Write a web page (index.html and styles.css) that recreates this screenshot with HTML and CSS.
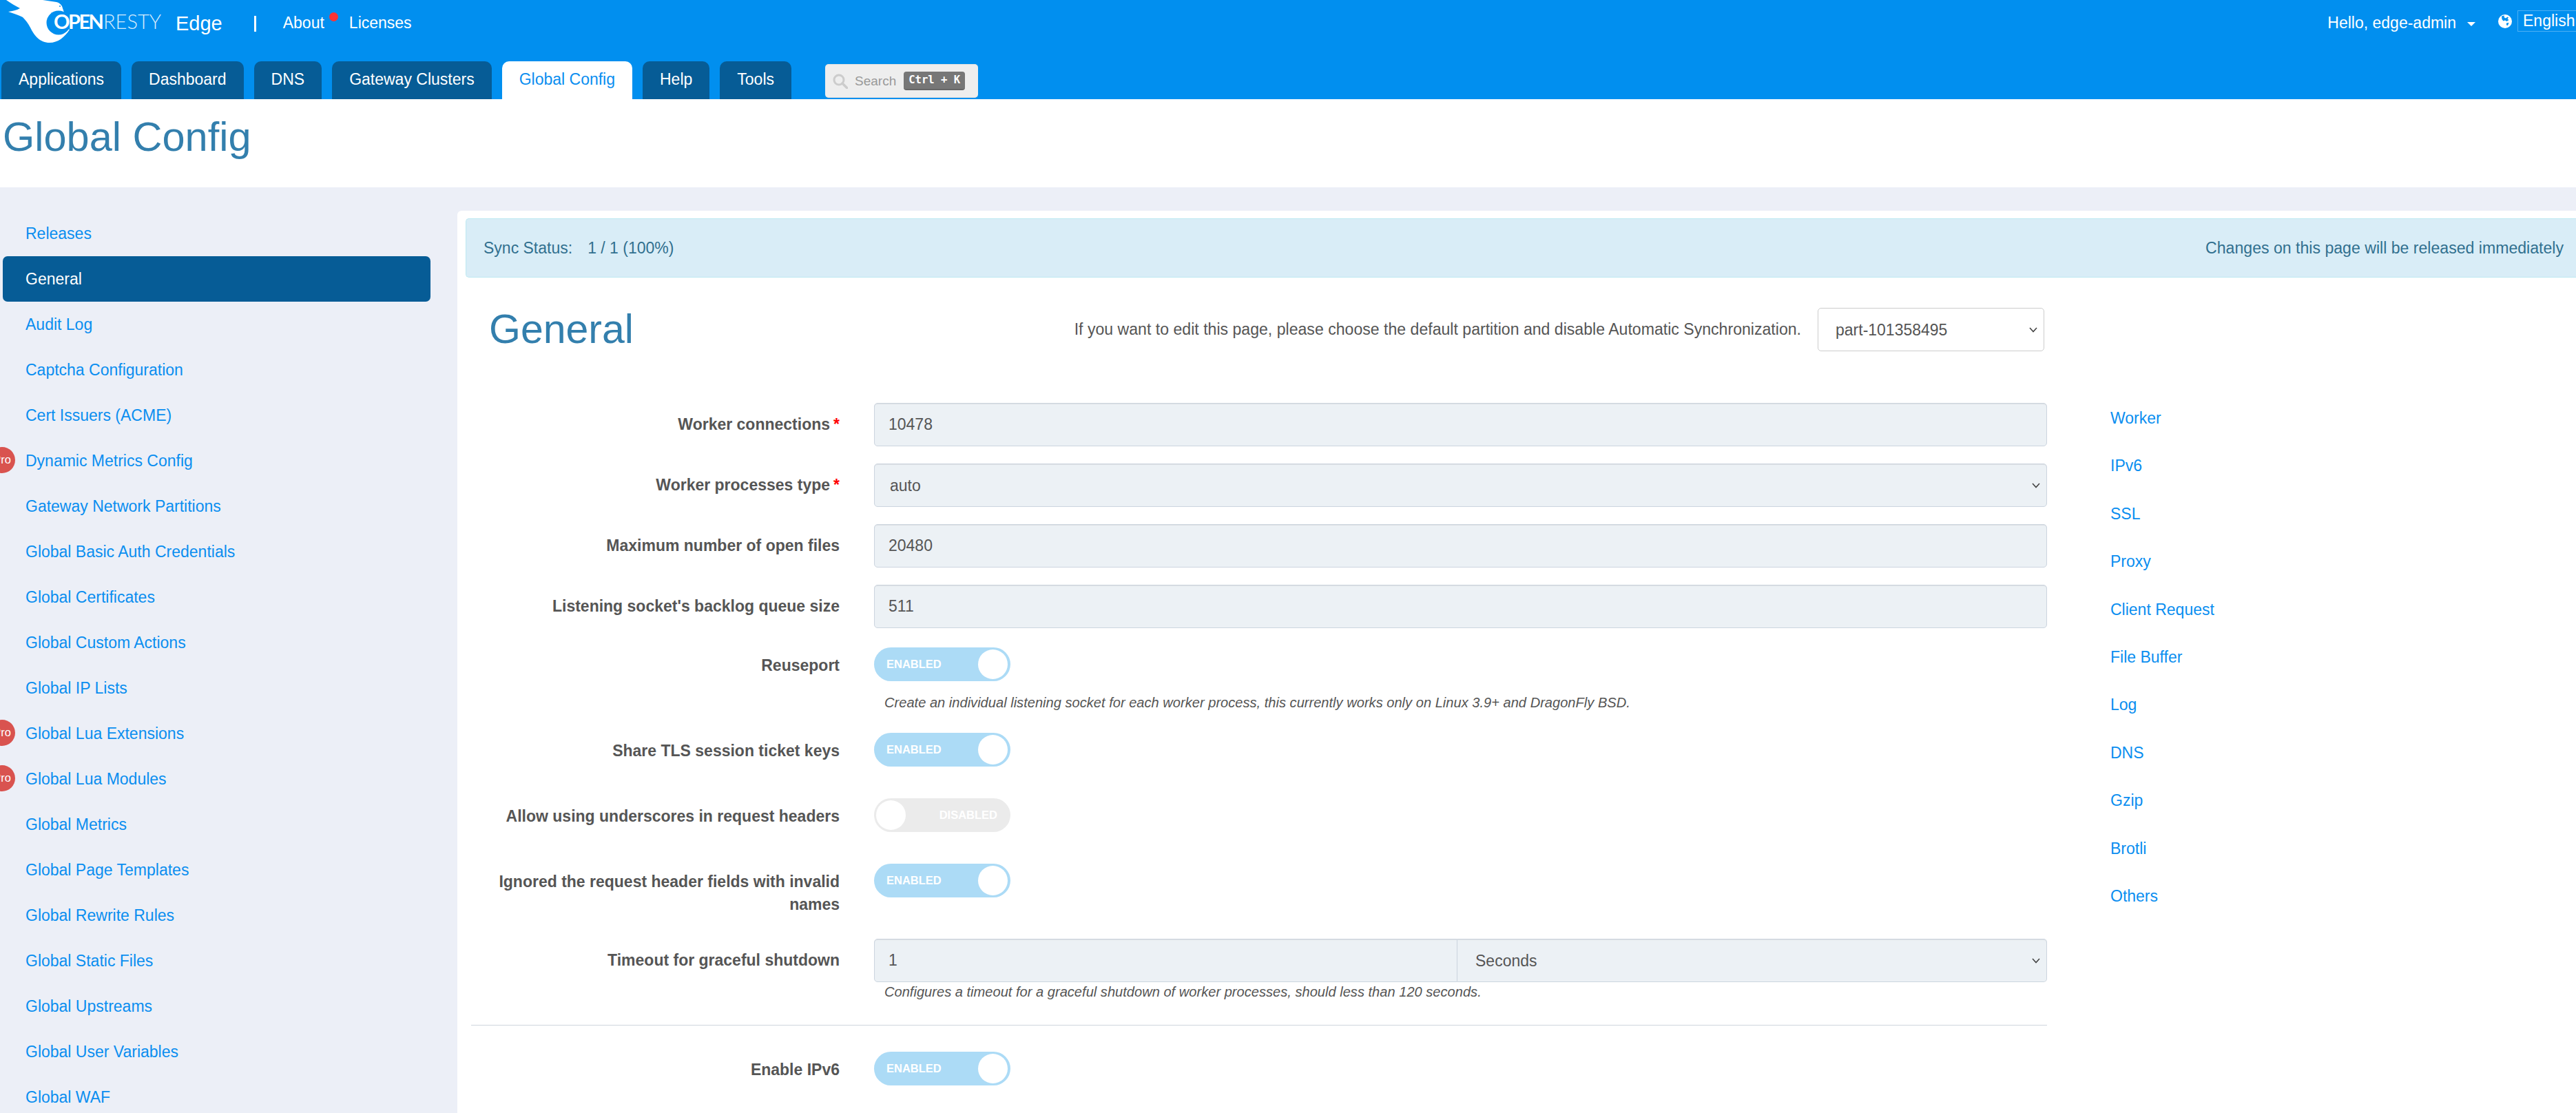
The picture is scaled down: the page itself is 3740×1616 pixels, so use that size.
FILE: index.html
```html
<!DOCTYPE html>
<html lang="en">
<head>
    <meta charset="UTF-8">
    <title>Global Config - OpenResty Edge</title>
    <link rel="stylesheet" href="styles.css">
</head>
<body>
    <header class="top-bar">
        <div class="brand-row">
            <svg class="logo" viewBox="0 0 245 70" width="245" height="70">
                <path class="logo-bird" d="M9 0C16 5 23 9 29 12C24 15 18 16 12 17C20 20 28 22 33 25C37 29 41 34 44 40C50 52 58 62 72 62C84 62 94 54 101 43L85 33L93 18L90 9Q87 4 82 3L62 0Z"/>
                <circle class="logo-cut" cx="85" cy="33" r="17.5"/>
                <circle class="logo-cut" cx="87" cy="9" r="1"/>
                <text class="logo-text" x="78" y="42"><tspan class="logo-open">OPEN</tspan><tspan class="logo-resty" x="150">RESTY</tspan></text>
            </svg>
            <span class="product-name">Edge</span>
            <span class="brand-sep"></span>
            <a class="top-link about-link">About<span class="red-dot"></span></a>
            <a class="top-link">Licenses</a>
            <div class="user-area">
                <span class="hello">Hello, edge-admin</span>
                <span class="caret"></span>
                <svg class="globe" viewBox="0 0 20 20" width="20" height="20">
                    <circle cx="10" cy="10" r="10" fill="#fff"/>
                    <path fill="#018fef" d="M5 2.5L9 1.5L8.5 4L11 5.5L13.5 3.5L15 4.5L13.5 6.5L15.5 8L12.5 10L10 8.5L7.5 9.5L5.5 7ZM12 12.5L15.5 12L14 16L12 15.5Z"/>
                </svg>
                <span class="lang-box">English</span>
            </div>
        </div>
        <nav class="tab-row">
            <a class="tab">Applications</a>
            <a class="tab">Dashboard</a>
            <a class="tab">DNS</a>
            <a class="tab">Gateway Clusters</a>
            <a class="tab active">Global Config</a>
            <a class="tab">Help</a>
            <a class="tab">Tools</a>
            <div class="search-box">
                <svg class="search-icon" viewBox="0 0 22 22" width="22" height="22">
                    <circle cx="9" cy="9" r="7" fill="none" stroke="#ccc" stroke-width="3"/>
                    <path d="M14 14L21 21" stroke="#ccc" stroke-width="3.5" stroke-linecap="round"/>
                </svg>
                <span class="search-text">Search</span>
                <kbd class="search-key">Ctrl + K</kbd>
            </div>
        </nav>
    </header>

    <div class="title-band">
        <h1>Global Config</h1>
    </div>

    <div class="main">
        <aside class="sidebar">
            <a class="side-item">Releases</a>
            <a class="side-item active">General</a>
            <a class="side-item">Audit Log</a>
            <a class="side-item">Captcha Configuration</a>
            <a class="side-item">Cert Issuers (ACME)</a>
            <a class="side-item"><span class="pro-badge">Pro</span>Dynamic Metrics Config</a>
            <a class="side-item">Gateway Network Partitions</a>
            <a class="side-item">Global Basic Auth Credentials</a>
            <a class="side-item">Global Certificates</a>
            <a class="side-item">Global Custom Actions</a>
            <a class="side-item">Global IP Lists</a>
            <a class="side-item"><span class="pro-badge">Pro</span>Global Lua Extensions</a>
            <a class="side-item"><span class="pro-badge">Pro</span>Global Lua Modules</a>
            <a class="side-item">Global Metrics</a>
            <a class="side-item">Global Page Templates</a>
            <a class="side-item">Global Rewrite Rules</a>
            <a class="side-item">Global Static Files</a>
            <a class="side-item">Global Upstreams</a>
            <a class="side-item">Global User Variables</a>
            <a class="side-item">Global WAF</a>
        </aside>

        <section class="content">
            <div class="sync-alert">
                <span><span class="sync-label">Sync Status:</span>1 / 1 (100%)</span>
                <span class="sync-note">Changes on this page will be released immediately</span>
            </div>

            <div class="page-layout">
                <div class="form-col">
                    <div class="head-row">
                        <h2>General</h2>
                        <div class="partition">
                            <span class="partition-text">If you want to edit this page, please choose the default partition and disable Automatic Synchronization.</span>
                            <select class="partition-select">
                                <option>part-101358495</option>
                            </select>
                        </div>
                    </div>

                    <div class="form-row">
                        <label class="field-label">Worker connections<span class="required">*</span></label>
                        <input class="text-field" type="text" value="10478">
                    </div>
                    <div class="form-row">
                        <label class="field-label">Worker processes type<span class="required">*</span></label>
                        <select class="text-field select-field"><option>auto</option></select>
                    </div>
                    <div class="form-row">
                        <label class="field-label">Maximum number of open files</label>
                        <input class="text-field" type="text" value="20480">
                    </div>
                    <div class="form-row last-input">
                        <label class="field-label">Listening socket's backlog queue size</label>
                        <input class="text-field" type="text" value="511">
                    </div>

                    <div class="form-row switch-row has-help">
                        <label class="field-label">Reuseport</label>
                        <div>
                            <div class="switch on"><span>ENABLED</span><i></i></div>
                            <p class="help-text help-gap">Create an individual listening socket for each worker process, this currently works only on Linux 3.9+ and DragonFly BSD.</p>
                        </div>
                    </div>
                    <div class="form-row switch-row">
                        <label class="field-label">Share TLS session ticket keys</label>
                        <div class="switch on"><span>ENABLED</span><i></i></div>
                    </div>
                    <div class="form-row switch-row">
                        <label class="field-label">Allow using underscores in request headers</label>
                        <div class="switch off"><i></i><span>DISABLED</span></div>
                    </div>
                    <div class="form-row switch-row two-line">
                        <label class="field-label">Ignored the request header fields with invalid names</label>
                        <div class="switch on"><span>ENABLED</span><i></i></div>
                    </div>
                    <div class="form-row timeout-row">
                        <label class="field-label">Timeout for graceful shutdown</label>
                        <div>
                            <div class="input-group">
                                <input class="text-field" type="text" value="1">
                                <select class="text-field select-field"><option>Seconds</option></select>
                            </div>
                            <p class="help-text help-tight">Configures a timeout for a graceful shutdown of worker processes, should less than 120 seconds.</p>
                        </div>
                    </div>

                    <hr class="divider">

                    <div class="form-row switch-row">
                        <label class="field-label">Enable IPv6</label>
                        <div class="switch on"><span>ENABLED</span><i></i></div>
                    </div>
                </div>

                <nav class="anchor-nav">
                    <a>Worker</a>
                    <a>IPv6</a>
                    <a>SSL</a>
                    <a>Proxy</a>
                    <a>Client Request</a>
                    <a>File Buffer</a>
                    <a>Log</a>
                    <a>DNS</a>
                    <a>Gzip</a>
                    <a>Brotli</a>
                    <a>Others</a>
                </nav>
            </div>
        </section>
    </div>
</body>
</html>
```

FILE: styles.css
```css
* {
    box-sizing: border-box;
}

html, body {
    margin: 0;
    height: 1616px;
    overflow: hidden;
}

body {
    background-color: #eceff7;
    color: #555;
    font-family: "Liberation Sans", Arial, sans-serif;
    font-size: 23px;
    line-height: 33px;
}

/* top bar */
.top-bar {
    height: 144px;
    background-color: #018fef;
    color: #fff;
    overflow: hidden;
}

.brand-row {
    display: flex;
    height: 89px;
    align-items: flex-start;
}

.logo {
    flex: none;
    margin-right: 10px;
}

.logo-bird {
    fill: #fff;
}

.logo-cut {
    fill: #018fef;
}

.logo-text {
    fill: #fff;
    font-family: "Lato", "Liberation Sans", sans-serif;
    font-size: 29px;
}

.logo-open {
    font-weight: 700;
    letter-spacing: -2.5px;
}

.logo-resty {
    font-weight: 300;
    fill-opacity: 0.85;
}

.product-name {
    font-size: 29px;
    margin-top: 18px;
}

.brand-sep {
    width: 3px;
    height: 23px;
    margin: 23px 39px 0 46px;
    background-color: #fff;
}

.top-link {
    position: relative;
    margin-top: 17px;
}

.about-link {
    margin-right: 36px;
}

.red-dot {
    position: absolute;
    left: 67px;
    top: 1px;
    width: 13px;
    height: 13px;
    border-radius: 50%;
    background-color: #f33;
}

.user-area {
    display: flex;
    align-items: flex-start;
    margin-left: auto;
    margin-right: -15px;
}

.hello {
    margin-top: 17px;
}

.caret {
    width: 0;
    height: 0;
    margin: 32px 33px 0 16px;
    border-left: 6.5px solid transparent;
    border-right: 6.5px solid transparent;
    border-top: 6.5px solid #fff;
}

.globe {
    margin: 21px 8px 0 0;
}

.lang-box {
    width: 100px;
    height: 31px;
    margin-top: 15px;
    padding-left: 7px;
    line-height: 29px;
    border: 1px solid rgba(255, 255, 255, 0.3);
}

.tab-row {
    display: flex;
    gap: 15px;
    height: 55px;
    padding-left: 2px;
}

.tab {
    padding: 10px 25px 0;
    border-radius: 10px 10px 0 0;
    background-color: #065c96;
    color: #fff;
}

.tab.active {
    background-color: #fff;
    color: #0a8ef0;
}

.search-box {
    display: flex;
    align-items: center;
    width: 222px;
    height: 49px;
    margin: 4px 0 0 34px;
    padding-left: 11px;
    border-radius: 5px;
    background-color: #eee;
    border-top: 1px solid #e2e2e2;
    border-bottom: 1px solid #ddd;
}

.search-text {
    margin-left: 10px;
    color: #999;
    font-size: 19px;
}

.search-key {
    width: 89px;
    height: 27px;
    margin-left: 11px;
    border-radius: 4px;
    background-color: #777;
    border-bottom: 2px solid #666;
    color: #fff;
    font-family: "DejaVu Sans Mono", "Liberation Mono", monospace;
    font-size: 15.6px;
    font-weight: bold;
    line-height: 25px;
    text-align: center;
}

/* page title */
.title-band {
    height: 128px;
    background-color: #fff;
}

.title-band h1 {
    margin: 0;
    padding: 21px 0 0 4px;
    color: #337fad;
    font-size: 59.5px;
    font-weight: normal;
    line-height: 67px;
}

.main {
    display: flex;
}

/* left menu */
.sidebar {
    flex: none;
    width: 664px;
    padding-top: 34px;
}

.side-item {
    position: relative;
    display: block;
    width: 621px;
    height: 66px;
    margin-left: 4px;
    padding-left: 33px;
    border-radius: 7px;
    color: #0a8ef0;
    line-height: 66px;
}

.side-item.active {
    background-color: #065c96;
    color: #fff;
}

.pro-badge {
    position: absolute;
    left: -20px;
    top: 13px;
    width: 38px;
    height: 38px;
    border-radius: 50%;
    background-color: #d9534f;
    color: #fff;
    font-size: 16.5px;
    line-height: 36px;
    text-align: center;
}

/* content */
.content {
    flex: 1;
    min-width: 0;
    margin-top: 34px;
    padding: 11px 0 0 12px;
    border-radius: 6px 0 0 0;
    background-color: #fff;
    height: 1310px;
}

.sync-alert {
    display: flex;
    justify-content: space-between;
    align-items: center;
    height: 86px;
    padding: 0 18px 0 25px;
    border: 1px solid #bce8f1;
    border-right: none;
    border-radius: 5px 0 0 5px;
    background-color: #d9edf7;
    color: #31708f;
}

.sync-label {
    margin-right: 22px;
}

.sync-note, .partition-text {
    font-size: 23.1px;
}

.page-layout {
    display: flex;
}

.form-col {
    flex: none;
    width: 2288px;
    margin-left: 8px;
}

.head-row {
    display: flex;
    justify-content: space-between;
    align-items: center;
    height: 63px;
    margin: 44px 0 75px;
    padding: 0 4px 0 26px;
}

.head-row h2 {
    margin: 0;
    color: #337fad;
    font-size: 59px;
    font-weight: normal;
}

.partition {
    display: flex;
    align-items: center;
    gap: 24px;
}

.partition-select, .select-field {
    appearance: none;
    background-image: url("data:image/svg+xml,%3Csvg xmlns='http://www.w3.org/2000/svg' width='12' height='8'%3E%3Cpath d='M1 1L6 6.5L11 1' fill='none' stroke='%23444' stroke-width='1.6'/%3E%3C/svg%3E");
    background-repeat: no-repeat;
    background-position: right 9px center;
}

.partition-select {
    width: 329px;
    height: 63px;
    padding-left: 25px;
    border: 1px solid #ccc;
    border-radius: 5px;
    background-color: #fff;
    color: #555;
    font-family: inherit;
    font-size: 23px;
}

.form-row {
    display: grid;
    grid-template-columns: 535px 1703px;
    column-gap: 50px;
    margin-bottom: 25px;
}

.form-row.last-input {
    margin-bottom: 28px;
}

.field-label {
    padding-top: 15px;
    color: #555;
    font-weight: bold;
    text-align: right;
}

.required {
    margin-left: 5px;
    color: #f00;
}

.text-field {
    width: 100%;
    height: 63px;
    padding: 0 20px;
    border: 1px solid #ccd5df;
    border-radius: 5px;
    background-color: #ecf1f5;
    box-shadow: inset 0 1px 1px rgba(0, 0, 0, 0.075);
    color: #555;
    font-family: inherit;
    font-size: 23px;
}

.select-field {
    padding-left: 22px;
}

.input-group {
    display: flex;
}

.input-group .text-field {
    flex: none;
    width: 847px;
    border-radius: 5px 0 0 5px;
}

.input-group .select-field {
    flex: 1;
    padding-left: 26px;
    border-left: none;
    border-radius: 0 5px 5px 0;
}

.help-text {
    height: 30px;
    margin: 0;
    padding-left: 15px;
    color: #555;
    font-size: 20.1px;
    font-style: italic;
    line-height: 30px;
}

.help-gap {
    margin-top: 16px;
}

.help-tight {
    margin-top: -1px;
}

.switch-row {
    margin-bottom: 46px;
}

.switch-row .field-label {
    padding-top: 10px;
}

.switch-row.has-help {
    margin-bottom: 29px;
}

.switch-row.two-line {
    margin-bottom: 33px;
}

.timeout-row {
    margin-bottom: 33px;
}

.switch {
    display: flex;
    justify-content: space-between;
    align-items: center;
    width: 198px;
    height: 49px;
    padding: 0 4px 0 18px;
    border-radius: 25px;
    color: #fff;
    font-size: 16.5px;
    font-weight: bold;
}

.switch i {
    width: 43px;
    height: 43px;
    border-radius: 50%;
    background-color: #fff;
}

.switch.on {
    background-color: #acdbf6;
}

.switch.off {
    padding: 0 19px 0 3px;
    background-color: #ebebeb;
}

.divider {
    height: 1px;
    margin: 0 0 38px;
    border: none;
    background-color: #ced6dd;
}

/* right anchors */
.anchor-nav {
    display: flex;
    flex-direction: column;
    margin-left: 92px;
    padding-top: 170px;
}

.anchor-nav a {
    color: #0a8ef0;
    line-height: 69.4px;
}
```
